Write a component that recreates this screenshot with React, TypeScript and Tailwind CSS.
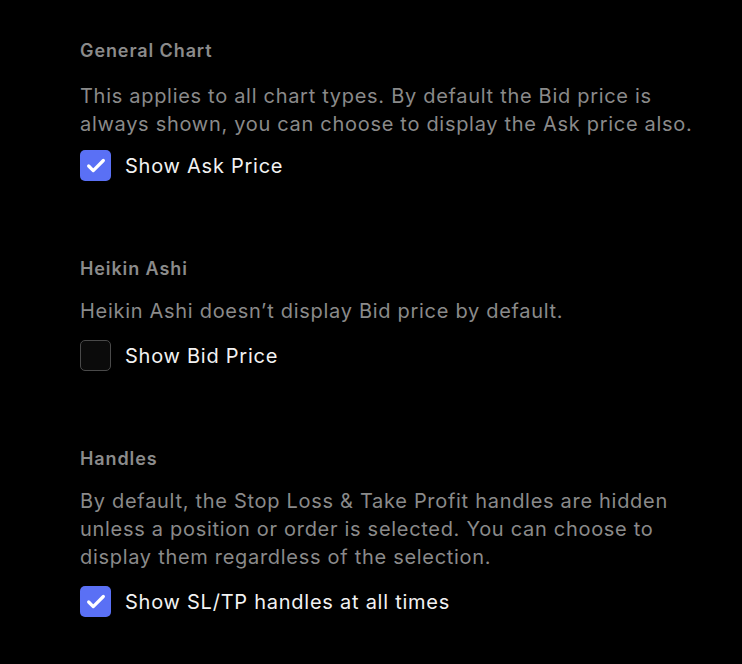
import { Check } from "lucide-react";

type Section = {
  title: string;
  text: string;
  label: string;
  checked: boolean;
};

const sections: Section[] = [
  {
    title: "General Chart",
    text: "This applies to all chart types. By default the Bid price is always shown, you can choose to display the Ask price also.",
    label: "Show Ask Price",
    checked: true,
  },
  {
    title: "Heikin Ashi",
    text: "Heikin Ashi doesn\u2019t display Bid price by default.",
    label: "Show Bid Price",
    checked: false,
  },
  {
    title: "Handles",
    text: "By default, the Stop Loss & Take Profit handles are hidden unless a position or order is selected. You can choose to display them regardless of the selection.",
    label: "Show SL/TP handles at all times",
    checked: true,
  },
];

function Checkbox({ checked }: { checked: boolean }) {
  return checked ? (
    <span className="flex h-[31px] w-[31px] items-center justify-center rounded-[5px] bg-[#5a70f5]">
      <Check className="h-[22px] w-[22px] text-white" strokeWidth={3.5} />
    </span>
  ) : (
    <span className="h-[31px] w-[31px] rounded-[5px] border border-[#4a4a4a] bg-[#0b0b0b]" />
  );
}

export default function App() {
  return (
    <div className="min-h-screen bg-black font-['Inter','Liberation_Sans',sans-serif] antialiased">
      <main className="flex flex-col gap-[74px] pl-20 pt-[37px]">
        {sections.map((s, i) => (
          <section key={s.title} className="w-[620px]">
            <h2 className="text-[18px] font-semibold leading-7 tracking-[0.9px] text-[#8b8b8b]">{s.title}</h2>
            <p
              className={`text-[20px] leading-7 tracking-[0.7px] text-[#8a8a8a] ${
                i === 0 ? "mt-[17px]" : "mt-[14px]"
              }`}
            >
              {s.text}
            </p>
            <label
              className={`flex h-[31px] items-center gap-[14px] ${i === 0 ? "mt-3" : "mt-[15px]"}`}
            >
              <Checkbox checked={s.checked} />
              <span className="text-[20px] leading-7 tracking-[0.75px] text-[#f2f2f2]">{s.label}</span>
            </label>
          </section>
        ))}
      </main>
    </div>
  );
}
